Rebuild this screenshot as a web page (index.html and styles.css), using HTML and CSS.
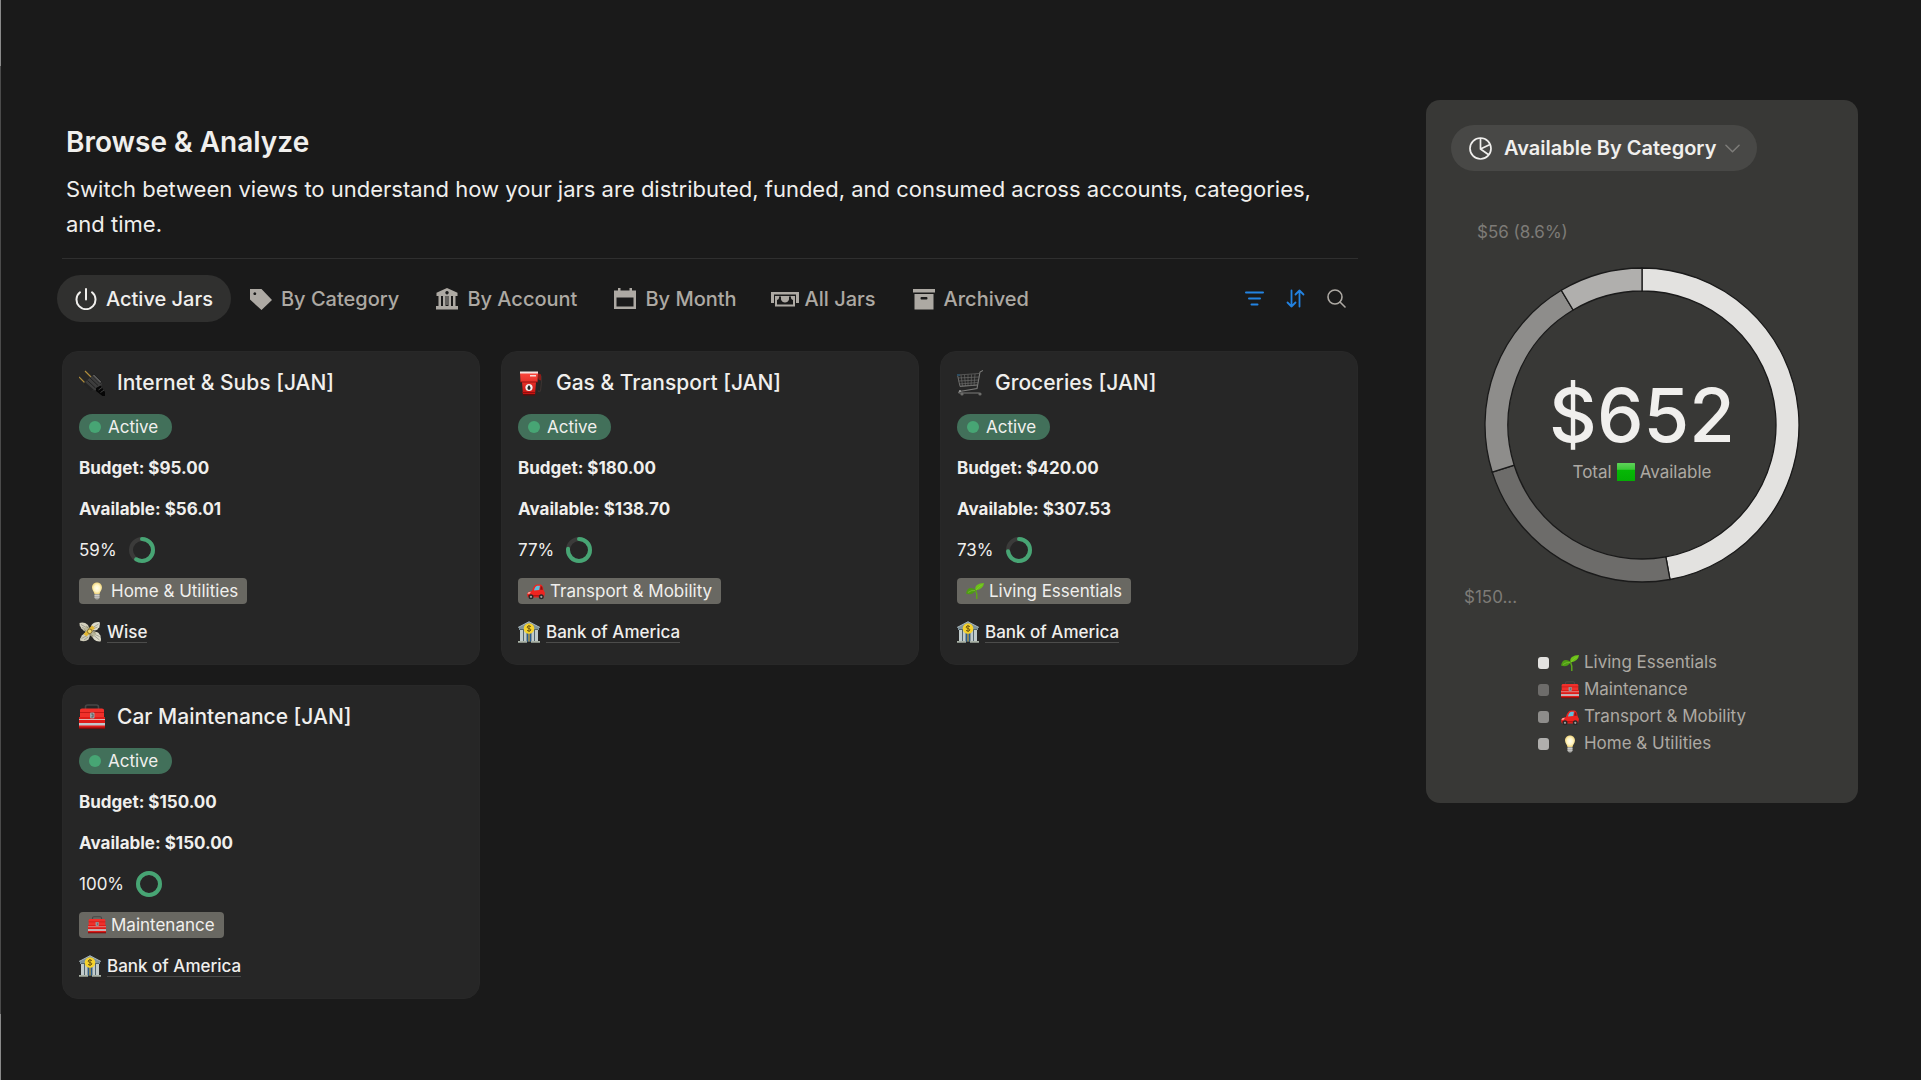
FILE: index.html
```html
<!DOCTYPE html>
<html lang="en">
<head>
    <meta charset="utf-8">
    <title>Browse &amp; Analyze</title>
    <link rel="stylesheet" href="styles.css">
</head>
<body>
    <!-- Shared icons -->
    <svg class="sprite" aria-hidden="true">
        <defs>
            <linearGradient id="green" x1="0" y1="0" x2="0" y2="1">
                <stop offset="0" stop-color="#5fd35a"/>
                <stop offset="0.35" stop-color="#3cc838"/>
                <stop offset="0.4" stop-color="#06b806"/>
                <stop offset="1" stop-color="#04ad04"/>
            </linearGradient>
            <linearGradient id="red" x1="0" y1="0" x2="0" y2="1">
                <stop offset="0" stop-color="#ff4a40"/>
                <stop offset="1" stop-color="#c4100e"/>
            </linearGradient>
            <radialGradient id="glow">
                <stop offset="0" stop-color="#fffef2"/>
                <stop offset="0.6" stop-color="#fff5c4"/>
                <stop offset="1" stop-color="#eed37c"/>
            </radialGradient>
        </defs>
        <symbol id="plug" viewBox="0 0 26 26">
            <path d="M6 1l7 7M0 7l7 7" stroke="#b08d3c" stroke-width="1.2"/>
            <path d="M15 4l8 8-1 5-4 3-5 .5L4 14z" fill="#3d3d3d"/>
            <path d="M15 4l8 8-2 1.500-8-8zM11 8l8 7.500M8.500 10.500l8 7.500" fill="#575757" stroke="#181818" stroke-width="0.8"/>
            <path d="M4 14l2-2 9 8-3 1z" fill="#232323"/>
            <path d="M17 18l4.500-2.500L26 22v4h-2.500L17 21z" fill="#060606"/>
            <path d="M19.500 20l3.500-2.500M21.500 22.500l3.500-2.500" stroke="#5a5a5a" stroke-width="0.7"/>
        </symbol>
        <symbol id="pump" viewBox="0 0 26 26">
            <path d="M21 4l2.500 2.500v6l-1 8q-1.500 2.500-2.500 0" fill="none" stroke="#3a3230" stroke-width="1.200"/>
            <path d="M19 3l4 1.500v6l-2.500-1z" fill="#8e1b18"/>
            <path d="M2 2h18l-.5 10H18l-1 13H5L4 12H2.500z" fill="url(#red)"/>
            <path d="M2 1.500h18v2H2z" fill="#f1e3e1"/>
            <path d="M2 12h18M4 22.500h13" stroke="#8d0d0d" stroke-width="0.900"/>
            <rect x="12" y="5" width="6" height="1.500" fill="#f5d9d6"/>
            <path d="M5 24h12v1.500H5z" fill="#5e0b0b"/>
            <circle cx="11" cy="17.500" r="3.600" fill="#f4efef"/>
            <path d="M11 15q3.200 3.500 0 5-3.200-1.500 0-5" fill="#222"/>
        </symbol>
        <symbol id="cart" viewBox="0 0 26 26">
            <path d="M26 .5l-3 1.500-3 16.500L2.500 21.500q-1.500 1 0 1.500h20" fill="none" stroke="#7d7d7b" stroke-width="1.100"/>
            <path d="M.5 5L22 3.500M1 8l21-1M1.500 11l20-1M2 14l19-1.500M3 16l17.500-1M4 5l1.500 11M7.500 5l1 11M11 4.500v11.500M14.500 4.500L14 16M18 4l-1 12" fill="none" stroke="#6a6a68" stroke-width="0.700"/>
            <path d="M.5 5L3 16.500l17.500-1.500" fill="none" stroke="#747472" stroke-width="0.900"/>
            <circle cx="5" cy="24" r="1.600" fill="#6d6d6b"/>
            <circle cx="23" cy="24" r="1.600" fill="#6d6d6b"/>
            <circle cx="3" cy="21" r="1" fill="#999"/>
            <path d="M0 5h3" stroke="#2d4c60" stroke-width="2"/>
        </symbol>
        <symbol id="toolbox" viewBox="0 0 26 26">
            <path d="M6.500 6V3Q6.500 1 8.500 1h9q2 0 2 2v3" fill="none" stroke="#474747" stroke-width="1.600"/>
            <path d="M1 6Q1 4.500 3 4.500h20q2 0 2 1.500v8H1z" fill="#f0302b"/>
            <path d="M0 13h26v10.500q0 1-1 1H1q-1 0-1-1z" fill="#e01b18"/>
            <path d="M1 8.500h24" stroke="#b81310" stroke-width="0.800"/>
            <path d="M0 15.500h26" stroke="#dcc5c4" stroke-width="0.900"/>
            <path d="M0 19h26v2.500H0z" fill="#c3c6ca"/>
            <path d="M0 23.500h26v1.500H0z" fill="#7c0d0c"/>
            <rect x="11" y="8.500" width="4.500" height="6" rx="1" fill="#9da1a4"/>
            <path d="M12.300 10h1.700v3h-1.700" fill="none" stroke="#4a4d50" stroke-width="0.800"/>
        </symbol>
        <symbol id="bulb" viewBox="0 0 18 18">
            <path d="M9 .5c3 0 5 2.200 5 5 0 2.500-2 4-2.500 6.500h-5C6 9.500 4 8 4 5.500c0-2.800 2-5 5-5z" fill="url(#glow)"/>
            <path d="M6.500 12h5v4L10 17.500H8L6.500 16z" fill="#a3a3a0"/>
            <path d="M6.500 13.500h5M6.500 15.200h5" stroke="#dededb" stroke-width="0.700"/>
        </symbol>
        <symbol id="car" viewBox="0 0 18 18">
            <path d="M5 9q1.500-6 5-6.500h3.500q2.500.5 3 5.500l1.500 3-1 4.500H1q-1-1-.8-4Q1.500 9 5 9z" fill="#ee2420"/>
            <path d="M7 8.500q.8-4 3.300-4.700H13L12.200 8z" fill="#5fc0dc"/>
            <path d="M13.800 4l1.400.7.600 3.100h-2.600z" fill="#8c1412"/>
            <path d="M1 10.500l3-.7-1.500 2H.5z" fill="#ffb0a8"/>
            <path d="M1 13.800h12" stroke="#a10e0c" stroke-width="1"/>
            <circle cx="4" cy="14.800" r="2.500" fill="#292929"/><circle cx="4" cy="14.800" r="1.100" fill="#a2a2a2"/>
            <circle cx="14.300" cy="14.800" r="2.500" fill="#292929"/><circle cx="14.300" cy="14.800" r="1.100" fill="#a2a2a2"/>
        </symbol>
        <symbol id="sprout" viewBox="0 0 18 18">
            <path d="M9.500 8q2 4 1.300 9" fill="none" stroke="#5da61a" stroke-width="1.500"/>
            <path d="M9.500 8.500Q8.500 5 11 3q2.500-2 7-2-.5 6-8.500 7.500z" fill="#6cc118"/>
            <path d="M10 8Q5 4.500 2 7 .5 8.500 0 11.500q6 2.500 10-3.500z" fill="#4e9c14"/>
            <path d="M10 8q3-4 6.500-5.500M9 8.500Q5 8 2 10.500" fill="none" stroke="#86cf35" stroke-width="0.600"/>
        </symbol>
        <symbol id="bank" viewBox="0 0 22 22">
            <path d="M11 .5L21 6v3H1V6z" fill="#7d929c"/>
            <path d="M0 6.500L11 .8l11 5.700" fill="none" stroke="#a8b6bb" stroke-width="1"/>
            <path d="M2 8h18v12.500H2z" fill="#52646c"/>
            <path d="M2 9h3v11H2zM6 9h2.500v11H6zM13.500 9H16v11h-2.500zM17 9h3v11h-3z" fill="#c1cbcb"/>
            <path d="M9 12h4v8.500H9z" fill="#285d91"/>
            <path d="M11 12v8.500" stroke="#d9aa35" stroke-width="1.200"/>
            <path d="M0 20h9v1.800H0zM13 20h9v1.800h-9z" fill="#a9b2a6"/>
            <circle cx="11" cy="7.500" r="5.300" fill="#f5d22d"/>
            <path d="M13 5.500q-3.500-1.500-4 .5 0 1 2 1.500t2 1.500q-.5 2-4 .5M11 4v7" fill="none" stroke="#725a10" stroke-width="1"/>
        </symbol>
        <symbol id="money" viewBox="0 0 22 22">
            <!-- wings -->
            <path d="M.5 2Q5 .5 9 4l1.500 4L7 10Q3.500 9.500 3 8 1.500 7.500 1.800 6 .3 5 .5 2z" fill="#d3d0bd"/>
            <path d="M20.500 1Q15 .5 12.500 4l-1 4.500 4 1Q19 9 19 7.500q2-1 1.500-2.500 1-1.500 0-4z" fill="#dcdac9"/>
            <path d="M1 19.500Q.8 17 2.200 16q0-2 1.800-2.500L7 11l4 3.500-1.500 4Q6 21.500 1 19.500z" fill="#cfccb9"/>
            <path d="M12 14l3.500-3.500Q20 11 20.500 13.500q1.500 1 1 2.500 1 2.500 0 4.500-4 .5-6.500-2z" fill="#dcdac9"/>
            <path d="M2 3.500l6 3.500M3 6.500l4 1.500M19.500 3L14 6.500M18.500 6L15 7.500M2.500 17.500L8 14.500M5 19l4-3M20.500 19L15 14.500M20.500 15.500l-4.500-2" stroke="#8a897c" stroke-width="0.700"/>
            <!-- banded notes -->
            <path d="M7.500 4.500L17.500 12 14 16.500 4 9z" fill="#b9b69b"/>
            <path d="M7.500 5.800L16.200 12.200M5.300 8.800L14 15.200" stroke="#807e67" stroke-width="0.700"/>
            <path d="M13 4.500l3 2.500-8.500 8.500-3-2.500z" fill="#e2b632"/>
            <circle cx="10.700" cy="10.300" r="2.300" fill="#f0d56a" stroke="#6f5e28" stroke-width="0.800"/>
        </symbol>
        <symbol id="square" viewBox="0 0 18 18">
            <rect x="0" y="0" width="18" height="18" rx="0.500" fill="url(#green)"/>
        </symbol>
    </svg>

    <div class="page">
        <main>
            <header class="intro">
                <h1>Browse &amp; Analyze</h1>
                <p>Switch between views to understand how your jars are distributed, funded, and consumed across accounts, categories, and time.</p>
            </header>

            <div class="toolbar">
                <nav class="tabs">
                    <button class="tab active">
                        <svg class="tab-icon" viewBox="0 0 22 22" fill="none" stroke="currentColor" stroke-width="2" stroke-linecap="round"><path d="M11 1v10.500"/><path d="M5 4.300a9.500 9.500 0 1 0 12 0"/></svg>
                        Active Jars
                    </button>
                    <button class="tab">
                        <svg class="tab-icon" viewBox="0 0 22 22" fill="currentColor"><path fill-rule="evenodd" d="M0 1h11.500L22 12 11.500 22 0 11.500zM4.800 4.300a1.400 1.400 0 1 0 .01 0z"/></svg>
                        By Category
                    </button>
                    <button class="tab">
                        <svg class="tab-icon" viewBox="0 0 22 22" fill="currentColor"><path fill-rule="evenodd" d="M11 0l10.500 4.800V8h-2v10H22v3.500H0V18h2.500V8h-2V4.800zM11 3a1.700 1.700 0 1 0 .01 0zM5 8v10h2V8zm4.500 0v10h3V8h-1v9h-1V8zM15 8v10h2V8z"/></svg>
                        By Account
                    </button>
                    <button class="tab">
                        <svg class="tab-icon" viewBox="0 0 22 22" fill="currentColor"><path fill-rule="evenodd" d="M4 0h2.500v2.500h9V0H18v2.500h4V21H0V2.500h4zM2.500 9.500v9h17v-9z"/></svg>
                        By Month
                    </button>
                    <button class="tab wide">
                        <svg class="tab-icon wide-icon" viewBox="0 0 28 22" fill="currentColor"><path d="M0 4h28v11h-3V6.500H3V15H0z"/><path fill-rule="evenodd" d="M4 8h20v10.500H4zM8 8.500Q8.500 11 6 12v4.500h16V12q-2.500-1-2-3.500h-2v3q-1 3-4 3t-4-3v-3z"/><path d="M11 8.500h6q.5 4-3 4.500-3.500-.5-3-4.500z"/></svg>
                        All Jars
                    </button>
                    <button class="tab">
                        <svg class="tab-icon" viewBox="0 0 22 22" fill="currentColor"><path d="M0 1h22v3.500H0z"/><path fill-rule="evenodd" d="M1.500 6h19v15.500h-19zM8.500 9q-1 0-1 1.300t1 1.300h5q1 0 1-1.300T13.500 9z"/></svg>
                        Archived
                    </button>
                </nav>
                <div class="actions">
                    <button class="action on" aria-label="Filter">
                        <svg viewBox="0 0 19 19" fill="none" stroke="currentColor" stroke-width="2" stroke-linecap="round"><path d="M1 3.500h17M4 9.500h11M6.500 15.500h6"/></svg>
                    </button>
                    <button class="action on" aria-label="Sort">
                        <svg viewBox="0 0 19 19" fill="none" stroke="currentColor" stroke-width="1.800" stroke-linecap="round" stroke-linejoin="round"><path d="M5.500 1.500v16M1.500 13.500l4 4 4-4M13.500 17.500v-16M9.500 5.500l4-4 4 4"/></svg>
                    </button>
                    <button class="action" aria-label="Search">
                        <svg viewBox="0 0 19 19" fill="none" stroke="currentColor" stroke-width="1.600" stroke-linecap="round"><circle cx="8" cy="8" r="7"/><path d="M13 13l5 5"/></svg>
                    </button>
                </div>
            </div>

            <section class="cards">
                <article class="card">
                    <h2><svg class="card-icon"><use href="#plug"/></svg>Internet &amp; Subs [JAN]</h2>
                    <div class="row"><span class="status">Active</span></div>
                    <div class="row bold">Budget: $95.00</div>
                    <div class="row bold">Available: $56.01</div>
                    <div class="row progress">59%
                        <svg class="ring" viewBox="0 0 26 26"><circle class="track" cx="13" cy="13" r="11"/><circle class="value" cx="13" cy="13" r="11" pathLength="100" style="stroke-dasharray: 59 100"/></svg>
                    </div>
                    <div class="row"><span class="tag"><svg class="emoji"><use href="#bulb"/></svg>Home &amp; Utilities</span></div>
                    <div class="row account"><svg class="account-icon"><use href="#money"/></svg><a href="#">Wise</a></div>
                </article>

                <article class="card">
                    <h2><svg class="card-icon"><use href="#pump"/></svg>Gas &amp; Transport [JAN]</h2>
                    <div class="row"><span class="status">Active</span></div>
                    <div class="row bold">Budget: $180.00</div>
                    <div class="row bold">Available: $138.70</div>
                    <div class="row progress">77%
                        <svg class="ring" viewBox="0 0 26 26"><circle class="track" cx="13" cy="13" r="11"/><circle class="value" cx="13" cy="13" r="11" pathLength="100" style="stroke-dasharray: 77 100"/></svg>
                    </div>
                    <div class="row"><span class="tag"><svg class="emoji"><use href="#car"/></svg>Transport &amp; Mobility</span></div>
                    <div class="row account"><svg class="account-icon"><use href="#bank"/></svg><a href="#">Bank of America</a></div>
                </article>

                <article class="card">
                    <h2><svg class="card-icon"><use href="#cart"/></svg>Groceries [JAN]</h2>
                    <div class="row"><span class="status">Active</span></div>
                    <div class="row bold">Budget: $420.00</div>
                    <div class="row bold">Available: $307.53</div>
                    <div class="row progress">73%
                        <svg class="ring" viewBox="0 0 26 26"><circle class="track" cx="13" cy="13" r="11"/><circle class="value" cx="13" cy="13" r="11" pathLength="100" style="stroke-dasharray: 73 100"/></svg>
                    </div>
                    <div class="row"><span class="tag"><svg class="emoji"><use href="#sprout"/></svg>Living Essentials</span></div>
                    <div class="row account"><svg class="account-icon"><use href="#bank"/></svg><a href="#">Bank of America</a></div>
                </article>

                <article class="card">
                    <h2><svg class="card-icon"><use href="#toolbox"/></svg>Car Maintenance [JAN]</h2>
                    <div class="row"><span class="status">Active</span></div>
                    <div class="row bold">Budget: $150.00</div>
                    <div class="row bold">Available: $150.00</div>
                    <div class="row progress">100%
                        <svg class="ring" viewBox="0 0 26 26"><circle class="track" cx="13" cy="13" r="11"/><circle class="value" cx="13" cy="13" r="11" pathLength="100" style="stroke-dasharray: 100 100"/></svg>
                    </div>
                    <div class="row"><span class="tag"><svg class="emoji"><use href="#toolbox"/></svg>Maintenance</span></div>
                    <div class="row account"><svg class="account-icon"><use href="#bank"/></svg><a href="#">Bank of America</a></div>
                </article>
            </section>
        </main>

        <aside class="panel">
            <button class="view-select">
                <svg class="pie" viewBox="0 0 23 23" fill="none" stroke="currentColor" stroke-width="1.700" stroke-linejoin="round"><circle cx="11.500" cy="11.500" r="10.500"/><path d="M11.500 1v11l8.500 6M11.500 12L21 7.500"/></svg>
                Available By Category
                <svg class="chevron" viewBox="0 0 16 9" fill="none" stroke="currentColor" stroke-width="1.600" stroke-linecap="round" stroke-linejoin="round"><path d="M1 1l7 7 7-7"/></svg>
            </button>

            <div class="chart-label top">$56 (8.6%)</div>
            <div class="donut">
                <svg viewBox="0 0 316 316" stroke="#1a1a1a" stroke-width="1.300">
                    <g transform="translate(-2 -2)">
                        <path fill="#e3e2e0" d="M160 3A157 157 0 0 1 187.960 314.490L183.870 291.860A134 134 0 0 0 160 26z"/>
                        <path fill="#6d6c6a" d="M187.960 314.490A157 157 0 0 1 10.240 207.130L32.180 200.230A134 134 0 0 0 183.870 291.860z"/>
                        <path fill="#8e8d8b" d="M10.240 207.130A157 157 0 0 1 79.330 25.310L91.150 45.040A134 134 0 0 0 32.180 200.230z"/>
                        <path fill="#b0afad" d="M79.330 25.310A157 157 0 0 1 160 3V26A134 134 0 0 0 91.150 45.040z"/>
                    </g>
                </svg>
                <div class="total">
                    <strong>$652</strong>
                    <span>Total <svg class="emoji"><use href="#square"/></svg> Available</span>
                </div>
            </div>
            <div class="chart-label bottom">$150...</div>

            <ul class="legend">
                <li><i class="key living"></i><svg class="emoji"><use href="#sprout"/></svg>Living Essentials</li>
                <li><i class="key maintenance"></i><svg class="emoji"><use href="#toolbox"/></svg>Maintenance</li>
                <li><i class="key transport"></i><svg class="emoji"><use href="#car"/></svg>Transport &amp; Mobility</li>
                <li><i class="key home"></i><svg class="emoji"><use href="#bulb"/></svg>Home &amp; Utilities</li>
            </ul>
        </aside>
    </div>
</body>
</html>
```
FILE: styles.css
```css
* {
    box-sizing: border-box;
}

body {
    margin: 0;
    min-height: 100vh;
    font-family: Inter, "Liberation Sans", sans-serif;
    font-size: 17px;
    color: #f0efed;
    /* thin line along the left edge, brighter at both ends */
    background: linear-gradient(#8a8a8a 66px, #4b4b4b 66px, #4b4b4b calc(100% - 66px), #8a8a8a calc(100% - 66px)) no-repeat 0 0 / 1px 100% #1a1a1a;
}

button {
    font: inherit;
    color: inherit;
    background: none;
    border: 0;
    padding: 0;
    cursor: pointer;
}

svg {
    flex: none;
}

.sprite {
    position: absolute;
    width: 0;
    height: 0;
}

.page {
    display: grid;
    grid-template-columns: 3fr 1fr;
    column-gap: 68px;
    align-items: start;
    padding: 100px 63px 80px 62px;
}

/* Heading */
.intro {
    padding: 24px 4px 16px;
    border-bottom: 1px solid #2f2f2f;
}

h1 {
    margin: 0 0 12px;
    font-size: 28px;
    line-height: 36px;
    font-weight: 600;
}

.intro p {
    margin: 0;
    font-size: 22px;
    line-height: 35px;
}

/* Tabs */
.toolbar {
    display: flex;
    justify-content: space-between;
    align-items: center;
    margin: 16px 0 29px -5px;
}

.tabs {
    display: flex;
    gap: 1px;
}

.tab {
    display: flex;
    align-items: center;
    gap: 9px;
    height: 47px;
    padding: 0 18px;
    border-radius: 24px;
    font-size: 20px;
    font-weight: 500;
    color: #ada9a3;
}

.tab.active {
    color: #f0efed;
    background: #30302f;
}

.tab.wide {
    gap: 6px;
    padding-left: 15px;
}

.tab-icon {
    width: 22px;
    height: 22px;
}

.wide-icon {
    width: 28px;
}

.actions {
    display: flex;
    gap: 22px;
    padding-right: 12px;
}

.action {
    display: flex;
    color: #ada9a3;
}

.action svg {
    width: 19px;
    height: 19px;
}

.action.on {
    color: #2383e2;
}

/* Cards */
.cards {
    display: grid;
    grid-template-columns: repeat(3, 1fr);
    gap: 20px 21px;
}

.card {
    display: flex;
    flex-direction: column;
    gap: 15px;
    padding: 16px 16px 19px;
    border-radius: 16px;
    background: #262626;
    border: 1px solid #282828;
}

.card h2 {
    display: flex;
    align-items: center;
    gap: 12px;
    margin: 0 0 1px;
    font-size: 21px;
    line-height: 30px;
    font-weight: 500;
}

.card-icon {
    width: 26px;
    height: 26px;
}

.row {
    display: flex;
    align-items: center;
    height: 26px;
    font-size: 17px;
}

.bold {
    font-weight: 700;
}

.status {
    display: flex;
    align-items: center;
    gap: 7px;
    height: 26px;
    padding: 0 14px 0 10px;
    border-radius: 13px;
    background: #42705a;
}

.status::before {
    content: "";
    width: 12px;
    height: 12px;
    border-radius: 50%;
    background: #47a574;
}

.progress {
    gap: 12px;
}

.ring {
    width: 26px;
    height: 26px;
    fill: none;
    stroke-width: 4;
    transform: rotate(-90deg);
}

.ring .track {
    stroke: #3b3b3a;
}

.ring .value {
    stroke: #47a574;
    stroke-linecap: round;
}

.tag {
    display: flex;
    align-items: center;
    gap: 5px;
    height: 26px;
    padding: 0 9px;
    border-radius: 4px;
    background: #696862;
}

.emoji {
    width: 18px;
    height: 18px;
}

.account {
    gap: 6px;
    font-weight: 500;
}

.account-icon {
    width: 22px;
    height: 22px;
}

.account a {
    color: inherit;
    text-decoration: none;
    border-bottom: 1px solid #4c4c4b;
}

/* Chart panel */
.panel {
    padding: 25px;
    border-radius: 14px;
    background: #383836;
}

.view-select {
    display: flex;
    align-items: center;
    height: 46px;
    padding: 0 17px 0 18px;
    border-radius: 23px;
    background: #484846;
    font-size: 20px;
    font-weight: 600;
}

.pie {
    width: 23px;
    height: 23px;
    margin-right: 12px;
}

.chevron {
    width: 15px;
    height: 9px;
    margin-left: 9px;
    color: #7d7c79;
}

.chart-label {
    line-height: 24px;
    color: #7d7b77;
}

.chart-label.top {
    margin-top: 49px;
    padding-left: 26px;
}

.chart-label.bottom {
    margin-top: 2px;
    padding-left: 13px;
}

.donut {
    display: grid;
    justify-items: center;
    margin-top: 23px;
}

.donut > * {
    grid-area: 1 / 1;
}

.donut > svg {
    width: 100%;
    max-width: 316px;
}

.total {
    display: flex;
    flex-direction: column;
    align-items: center;
    align-self: center;
    padding-top: 4px;
    color: #ada9a3;
}

.total strong {
    font-size: 74px;
    line-height: 90px;
    font-weight: 500;
    color: #f0efed;
}

.total span {
    display: flex;
    align-items: center;
    gap: 5px;
    line-height: 24px;
}

.legend {
    width: max-content;
    margin: 40px auto 21px;
    padding: 0;
    list-style: none;
    color: #ada9a3;
}

.legend li {
    display: flex;
    align-items: center;
    gap: 5px;
    line-height: 27px;
}

.key {
    width: 11px;
    height: 12px;
    margin-right: 7px;
    border-radius: 3px;
}

.key.living {
    background: #e3e2e0;
}

.key.maintenance {
    background: #6d6c6a;
}

.key.transport {
    background: #8e8d8b;
}

.key.home {
    background: #b0afad;
}
```
